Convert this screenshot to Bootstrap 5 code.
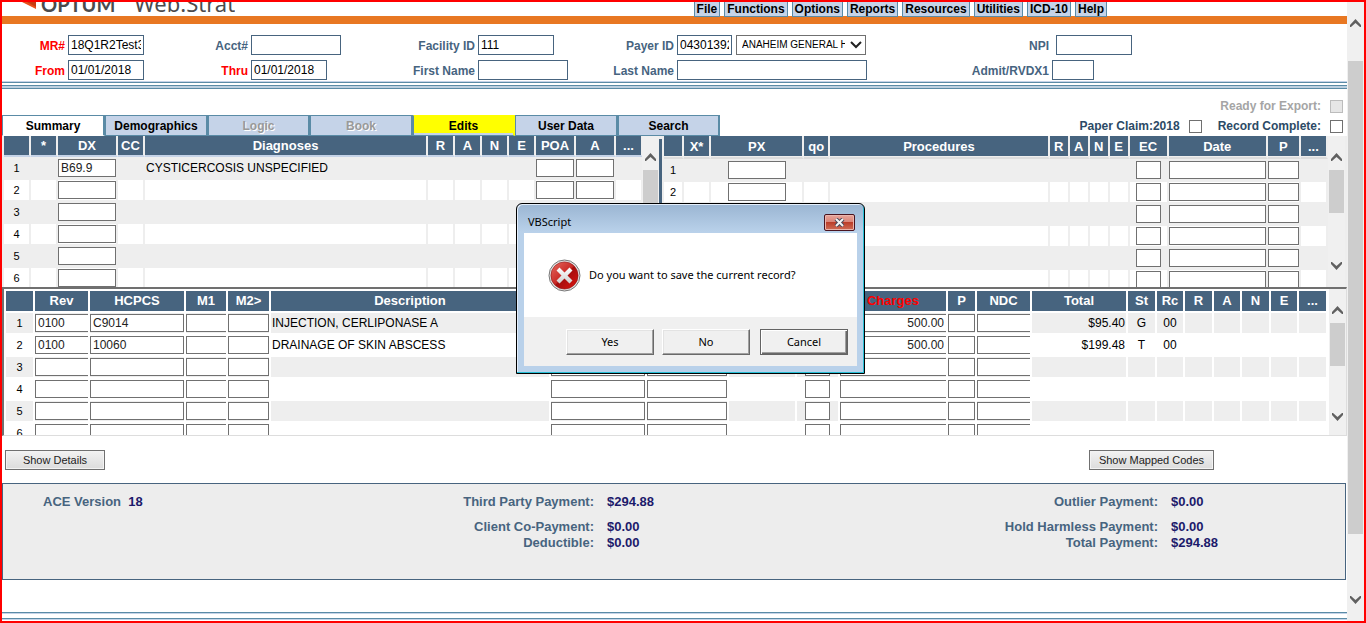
<!DOCTYPE html>
<html lang="en">
<head>
<meta charset="utf-8">
<meta name="viewport" content="width=device-width, initial-scale=1">
<title>Optum Web.Strat</title>
<link href="https://cdn.jsdelivr.net/npm/bootstrap@5.3.0/dist/css/bootstrap.min.css" rel="stylesheet">
<style>
:root { --steel:#47647f; --edge:#5a8ba6; --pale:#c5d3e8; --grey:#eee; }
body { font-family:"Liberation Sans",Arial,sans-serif; font-size:12px; line-height:16px; color:#000; background:#fff; }
.frame { min-height:100vh; border:2px solid #f00; }
.main-col { min-width:0; }

.topbar { height:22px; border-bottom:8px solid #e87722; padding-right:240px; }
.brand { height:14px; overflow:hidden; color:#4b4b4d; text-decoration:none; padding-left:20px; }
.brand svg { width:14px; height:8px; margin-bottom:6px; }
.brand-optum { font:bold 20px/20px Lato,sans-serif; margin-left:5px; margin-bottom:2px; }
.brand-web { font:22px/20px "Noto Sans",sans-serif; margin-left:19px; margin-bottom:3px; }
.menu-btn { height:15px; padding:0 2px; border:1px solid var(--edge); border-top:0; background:var(--pale); font-weight:bold; line-height:14px; color:#000; }

.fields { display:grid; grid-template-columns:minmax(0,66fr) minmax(0,91fr) minmax(0,92fr) minmax(0,109fr) minmax(0,118fr) minmax(0,109fr) minmax(0,90fr) minmax(0,223fr) minmax(0,152fr) minmax(0,295fr); row-gap:5px; padding:11px 0 1px; }
.fields label { text-align:right; padding:2px 3px 0 0; color:var(--steel); font-weight:bold; line-height:18px; white-space:nowrap; }
.fields label.req { color:#f00; }
.fields input, .fields select { height:20px; border:1px solid #47647f; border-radius:0; padding:0 2px; background:#fff; color:#000; }
.fields select { width:130px; border-color:#707070; padding:0 20px 0 5px; font-size:10px; appearance:none; background:#fff url("data:image/svg+xml,%3Csvg xmlns='http://www.w3.org/2000/svg' width='12' height='8'%3E%3Cpath d='M1 1l5 5L11 1' fill='none' stroke='%23222' stroke-width='2'/%3E%3C/svg%3E") no-repeat right 3px center; }
.w42 { width:42px; } .w55 { width:55px; } .w76 { width:76px; } .w90 { width:90px; } .w190 { width:190px; }

.rule-a { height:2px; background:var(--edge); border-top:1px solid var(--pale); }
.rule-b { height:4px; margin-top:2px; background:#bdd0e0; border:1px solid var(--edge); border-width:1px 0; }

.tabs-row { height:47px; }
.tab-btn { width:102px; height:21px; padding:0; border:1px solid var(--edge); border-right-width:2px; background:var(--pale); font-weight:bold; line-height:18px; color:#000; }
.tab-btn.wide { width:103px; }
.tab-btn.current { background:#fff; border-bottom-color:#fff; line-height:20px; }
.tab-btn:disabled { color:#999; text-shadow:1px 1px #fff; }
.tab-btn.alert-tab { background:#ff0; border-color:#ff0 #ff0 var(--edge) var(--edge); box-shadow:inset 0 -2px var(--pale); }
.checks { padding-right:4px; color:#2c4a66; font-weight:bold; }
.checks > div { height:20px; }
.checks input { appearance:none; width:13px; height:13px; margin:0 0 0 9px; border:1px solid #707070; background:#fff; }
.checks .off { color:#a5a5a5; }
.checks .off input { background:#e6e6e6; border-color:#bcbcbc; }

.panes { height:151px; overflow:hidden; background:var(--grey); }
.pane-dx { flex:661 1 0; min-width:0; padding-left:2px; }
.pane-px { flex:684 1 0; min-width:0; padding:0 2px; }
.divider { width:3px; margin-top:3px; background:var(--steel); }
.grid-wrap { flex:1 1 0; min-width:0; }
.grid-tbl { width:100%; table-layout:fixed; border-collapse:separate; border-spacing:0; }
.grid-tbl th { height:21px; padding:0; border-right:2px solid var(--grey); border-bottom:2px solid var(--pale); background:var(--steel); color:#fff; font-size:13px; line-height:18px; text-align:center; overflow:hidden; white-space:nowrap; }
.grid-tbl td { height:22px; padding:0; border:solid var(--grey); border-width:1px 2px 1px 0; background:#fff; line-height:18px; text-align:center; white-space:nowrap; overflow:hidden; }
.grid-tbl tr:nth-child(odd) td { background:var(--grey); }
.grid-tbl td.num { font-size:11px; }
.grid-tbl td.txt { text-align:left; padding-left:1px; }
.grid-tbl td.money { text-align:right; padding-right:1px; }
.grid-tbl input { display:block; width:100%; height:18px; padding:0 2px; border:1px solid #707070; border-radius:0; background:#fff; color:#222; }
.grid-tbl .px { width:58px; margin:auto; } .grid-tbl .ec { width:25px; margin:auto; }
.grid-tbl .cut { border-right:0; } .grid-tbl .right { text-align:right; }
.pane-px th { height:23px; border-bottom-color:#ddd; box-shadow:inset 0 -1px var(--grey); }

.lines { height:149px; overflow:hidden; border:solid #707070; border-width:2px 1px 1px 2px; border-right-color:#ddd; border-bottom-color:#ddd; }
.lines .grid-wrap { padding:2px 1px 0 2px; }
.lines .grid-tbl th { height:22px; border-color:#fff; line-height:20px; }
.lines .grid-tbl td { border-color:#fff; border-width:0 2px 2px 0; }
.lines th.hot { color:#f00; }

.bar { width:17px; background:#f0f0f0; }
.bar svg { width:11px; height:8px; margin:0 auto; display:block; }
.bar .thumb { width:15px; margin:9px auto 0; background:#cdcdcd; height:43px; }
.bar-dx, .bar-px { padding:17px 0 17px; }
.bar-lines { padding:17px 0 14px; }
.bar-page { padding:17px 0; }
.bar-page .thumb { flex:1; margin:34px 1px 62px; }

.act-btn { height:20px; padding:0; border:1px solid #707070; background:linear-gradient(#f2f2f2,#dcdcdc); box-shadow:inset 0 0 0 1px #f3f3f3; font-size:11px; line-height:16px; color:#222; }
.act-row { padding:14px 133px 13px 3px; }
.w125 { width:125px; } .w100 { width:100px; }

.totals { min-height:97px; margin-right:1px; padding:10px 0; border:1px solid var(--steel); background:#ededed; color:var(--steel); font-size:13px; font-weight:bold; display:grid; grid-template-columns:minmax(0,40fr) minmax(0,551fr) minmax(0,564fr) minmax(0,187fr); grid-template-rows:25px 16px 16px; }
.totals b { color:#1c1a6b; }
.totals .lbl { text-align:right; }
.totals .val { padding-left:13px; }
.foot { margin-top:32px; }
.foot div { height:2px; background:var(--edge); border-bottom:1px solid var(--pale); }

.dialog-box { left:516px; top:203px; width:349px; border:1px solid #000; border-radius:6px 6px 0 0; background:linear-gradient(#9ab5d2,#b9d1ea 28px); box-shadow:inset -1px -1px #27bfd6, inset 1px 1px #e4eefa; padding:0 7px 7px; font-family:"Noto Sans","Open Sans",sans-serif; font-size:11px; }
.dlg-title { height:29px; padding:6px 2px 0 4px; }
.dlg-close { width:31px; height:17px; padding:0; border:1px solid #4a1420; border-radius:2px; background:linear-gradient(#e9a59b,#d98377 48%,#bb3e2a 50%,#cf6d57); box-shadow:inset 0 0 0 1px #eab5ad; }
.dlg-close svg { display:block; margin:auto; }
.dlg-body { height:84px; background:#fff; padding:0 24px; gap:8px; }
.dlg-foot { height:49px; background:#f0f0f0; padding:12px 9px 0; }
.dlg-btn { width:88px; height:26px; padding:0; border:1px solid; border-color:#fff #696969 #696969 #fff; box-shadow:inset -1px -1px #a0a0a0, inset 1px 1px #e3e3e3; background:#f0f0f0; color:#000; }
.dlg-btn.default { border-color:#646464; box-shadow:inset 1px 1px #fff, inset -1px -1px #696969, inset -2px -2px #a0a0a0; margin-left:2px; }
</style>
</head>
<body>
<svg class="d-none" aria-hidden="true">
  <symbol id="up" viewBox="0 0 11 8"><path d="M0 6L5.500 0 11 6V8H10L5.500 4 1 8H0z" fill="#606060"/></symbol>
  <symbol id="down" viewBox="0 0 11 8"><path d="M0 2L5.500 8 11 2V0H10L5.500 4 1 0H0z" fill="#606060"/></symbol>
</svg>

<div class="frame d-flex position-relative">
  <div class="main-col flex-grow-1 d-flex flex-column">
    <header class="topbar d-flex justify-content-between">
      <a href="#" class="brand d-flex align-items-end">
        <svg viewBox="0 0 14 8"><path d="M0 0H14V7z" fill="#e8501c"/><path d="M5 0H14V5z" fill="#c63b12"/></svg>
        <span class="brand-optum">OPTUM</span><span class="brand-web">Web.Strat</span>
      </a>
      <nav class="d-flex gap-1">
        <button class="menu-btn">File</button><button class="menu-btn">Functions</button><button class="menu-btn">Options</button><button class="menu-btn">Reports</button><button class="menu-btn">Resources</button><button class="menu-btn">Utilities</button><button class="menu-btn">ICD-10</button><button class="menu-btn">Help</button>
      </nav>
    </header>

    <form class="fields">
      <label class="req" for="mr">MR#</label><div class="d-flex"><input id="mr" class="w76" value="18Q1R2Test3"></div>
      <label for="acct">Acct#</label><div class="d-flex"><input id="acct" class="w90"></div>
      <label for="fac">Facility ID</label><div class="d-flex"><input id="fac" class="w76" value="111"></div>
      <label for="payer">Payer ID</label><div class="d-flex gap-1"><input id="payer" class="w55" value="04301392"><select aria-label="Payer name"><option>ANAHEIM GENERAL HOSPITAL</option></select></div>
      <label for="npi">NPI</label><div class="d-flex ps-1"><input id="npi" class="w76"></div>
      <label class="req" for="from">From</label><div class="d-flex"><input id="from" class="w76" value="01/01/2018"></div>
      <label class="req" for="thru">Thru</label><div class="d-flex"><input id="thru" class="w76" value="01/01/2018"></div>
      <label for="first">First Name</label><div class="d-flex"><input id="first" class="w90"></div>
      <label for="last">Last Name</label><div class="d-flex"><input id="last" class="w190"></div>
      <label for="admit">Admit/RVDX1</label><div class="d-flex"><input id="admit" class="w42"></div>
    </form>
    <div class="rule-a"></div>
    <div class="rule-b"></div>

    <div class="tabs-row d-flex justify-content-between align-items-end">
      <nav class="d-flex">
        <button class="tab-btn wide current">Summary</button><button class="tab-btn wide">Demographics</button><button class="tab-btn" disabled>Logic</button><button class="tab-btn wide" disabled>Book</button><button class="tab-btn alert-tab">Edits</button><button class="tab-btn wide">User Data</button><button class="tab-btn">Search</button>
      </nav>
      <div class="checks">
        <div class="d-flex justify-content-end align-items-center off"><label for="ready">Ready for Export:</label><input type="checkbox" id="ready" disabled></div>
        <div class="d-flex justify-content-end align-items-center"><label for="paper">Paper Claim:2018</label><input type="checkbox" id="paper" class="me-3"><label for="rec">Record Complete:</label><input type="checkbox" id="rec"></div>
      </div>
    </div>

    <div class="panes d-flex">
      <section class="pane-dx d-flex">
        <div class="grid-wrap"><table class="grid-tbl" id="dx"></table></div>
        <div class="bar bar-dx d-flex flex-column"><svg><use href="#up"/></svg><div class="thumb"></div><svg class="mt-auto"><use href="#down"/></svg></div>
        <div class="divider"></div>
      </section>
      <section class="pane-px d-flex">
        <div class="grid-wrap"><table class="grid-tbl" id="px"></table></div>
        <div class="bar bar-px d-flex flex-column"><svg><use href="#up"/></svg><div class="thumb"></div><svg class="mt-auto"><use href="#down"/></svg></div>
      </section>
    </div>

    <section class="lines d-flex">
      <div class="grid-wrap"><table class="grid-tbl" id="lines"></table></div>
      <div class="bar bar-lines d-flex flex-column"><svg><use href="#up"/></svg><div class="thumb"></div><svg class="mt-auto"><use href="#down"/></svg></div>
    </section>

    <div class="act-row d-flex justify-content-between">
      <button class="act-btn w100">Show Details</button>
      <button class="act-btn w125">Show Mapped Codes</button>
    </div>

    <section class="totals">
      <div></div><div class="d-flex justify-content-between"><span>ACE Version &nbsp;<b>18</b></span><span>Third Party Payment:</span></div>
      <div class="d-flex justify-content-between"><b class="val">$294.88</b><span>Outlier Payment:</span></div><b class="val">$0.00</b>
      <div></div><div class="lbl">Client Co-Payment:</div>
      <div class="d-flex justify-content-between"><b class="val">$0.00</b><span>Hold Harmless Payment:</span></div><b class="val">$0.00</b>
      <div></div><div class="lbl">Deductible:</div>
      <div class="d-flex justify-content-between"><b class="val">$0.00</b><span>Total Payment:</span></div><b class="val">$294.88</b>
    </section>
    <div class="foot d-grid row-gap-3px"><div class="mb-1"></div><div></div></div>
  </div>

  <div class="bar bar-page d-flex flex-column"><svg><use href="#up"/></svg><div class="thumb"></div><svg><use href="#down"/></svg></div>
</div>

<div class="dialog-box position-absolute" role="dialog" aria-labelledby="dlgTitle">
  <div class="dlg-title d-flex justify-content-between align-items-start">
    <span id="dlgTitle" class="pt-1">VBScript</span>
    <button class="dlg-close mt-1" aria-label="Close"><svg width="11" height="9" viewBox="0 0 11 9"><path d="M2 1l7 7M9 1L2 8" stroke="#4b4a5c" stroke-width="4"/><path d="M2 1l7 7M9 1L2 8" stroke="#f4f4f4" stroke-width="2"/></svg></button>
  </div>
  <div class="dlg-body d-flex align-items-center">
    <svg width="33" height="33" viewBox="0 0 33 33">
      <defs><linearGradient id="ball" x1="0" y1="0" x2="1" y2="1"><stop offset="0" stop-color="#e66b62"/><stop offset=".48" stop-color="#c92a26"/><stop offset=".52" stop-color="#a30d0d"/><stop offset="1" stop-color="#e01510"/></linearGradient>
      <linearGradient id="cross" x1="0" y1="0" x2="0" y2="1"><stop offset="0" stop-color="#fff"/><stop offset="1" stop-color="#cfcfcf"/></linearGradient></defs>
      <circle cx="16.500" cy="16.500" r="15.500" fill="#e4e4e4" stroke="#777"/><circle cx="16.500" cy="16.500" r="13.600" fill="url(#ball)" stroke="#8d1010" stroke-width=".6"/>
      <path d="M11.500 8.500l5 5 5-5 3 3-5 5 5 5-3 3-5-5-5 5-3-3 5-5-5-5z" fill="url(#cross)"/>
    </svg>
    <span>Do you want to save the current record?</span>
  </div>
  <div class="dlg-foot d-flex justify-content-end gap-2"><button class="dlg-btn">Yes</button><button class="dlg-btn">No</button><button class="dlg-btn default">Cancel</button></div>
</div>

<script>
// Column: [heading, width, kind]. Kinds: num, txt, money, text (default), or "in" plus input classes.
const grids = {
  dx: { rows: 6, data: { 1: { 2: 'B69.9', 4: 'CYSTICERCOSIS UNSPECIFIED' } }, cols: [
    ['', 27, 'num'], ['*', 27], ['DX', 60, 'in'], ['CC', 27], ['Diagnoses', 283, 'txt'], ['R', 27], ['A', 27], ['N', 27], ['E', 27],
    ['POA', 40, 'in'], ['A', 40, 'in'], ['...', 27]] },
  px: { rows: 6, data: {}, cols: [
    ['', 20, 'num'], ['X*', 27], ['PX', 93, 'in px'], ['qo', 26], ['Procedures', 219], ['R', 20], ['A', 20], ['N', 20], ['E', 20],
    ['EC', 39, 'in ec'], ['Date', 99, 'in'], ['P', 33, 'in'], ['...', 27]] },
  lines: { rows: 6, data: {
      1: { 1: '0100', 2: 'C9014', 5: 'INJECTION, CERLIPONASE A', 10: '500.00', 13: '$95.40', 14: 'G', 15: '00' },
      2: { 1: '0100', 2: '10060', 5: 'DRAINAGE OF SKIN ABSCESS', 10: '500.00', 13: '$199.48', 14: 'T', 15: '00' } }, cols: [
    ['', 29, 'num'], ['Rev', 55, 'in cut'], ['HCPCS', 96, 'in'], ['M1', 42, 'in cut'], ['M2>', 43, 'in'], ['Description', 280, 'txt'],
    ['', 96, 'in'], ['', 82, 'in'], ['', 68], ['', 43, 'in ec'], ['Charges', 108, 'in cut right'], ['P', 29, 'in'], ['NDC', 55, 'in cut'],
    ['Total', 96, 'money'], ['St', 29], ['Rc', 28], ['R', 29], ['A', 28], ['N', 29], ['E', 28], ['...', 29]] }
};
for (const [id, g] of Object.entries(grids)) {
  let html = '<colgroup>' + g.cols.map(c => `<col style="width:${c[1]}px">`).join('') + '</colgroup><thead><tr>' +
    g.cols.map(c => `<th scope="col"${c[0] === 'Charges' ? ' class="hot"' : ''}>${c[0].replace('>', '&gt;')}</th>`).join('') + '</tr></thead><tbody>';
  for (let r = 1; r <= g.rows; r++) {
    html += '<tr>' + g.cols.map(([name, , kind = ''], i) => {
      const v = (g.data[r] || {})[i] || '';
      if (kind === 'num') return `<td class="num">${r}</td>`;
      if (kind.startsWith('in')) return `<td><input class="${kind.slice(3)}" value="${v}" aria-label="${name || 'Column ' + i} row ${r}"></td>`;
      return `<td class="${kind}">${v}</td>`;
    }).join('') + '</tr>';
  }
  document.getElementById(id).innerHTML = html + '</tbody>';
}
</script>
<script src="https://cdn.jsdelivr.net/npm/bootstrap@5.3.0/dist/js/bootstrap.bundle.min.js"></script>
</body>
</html>
